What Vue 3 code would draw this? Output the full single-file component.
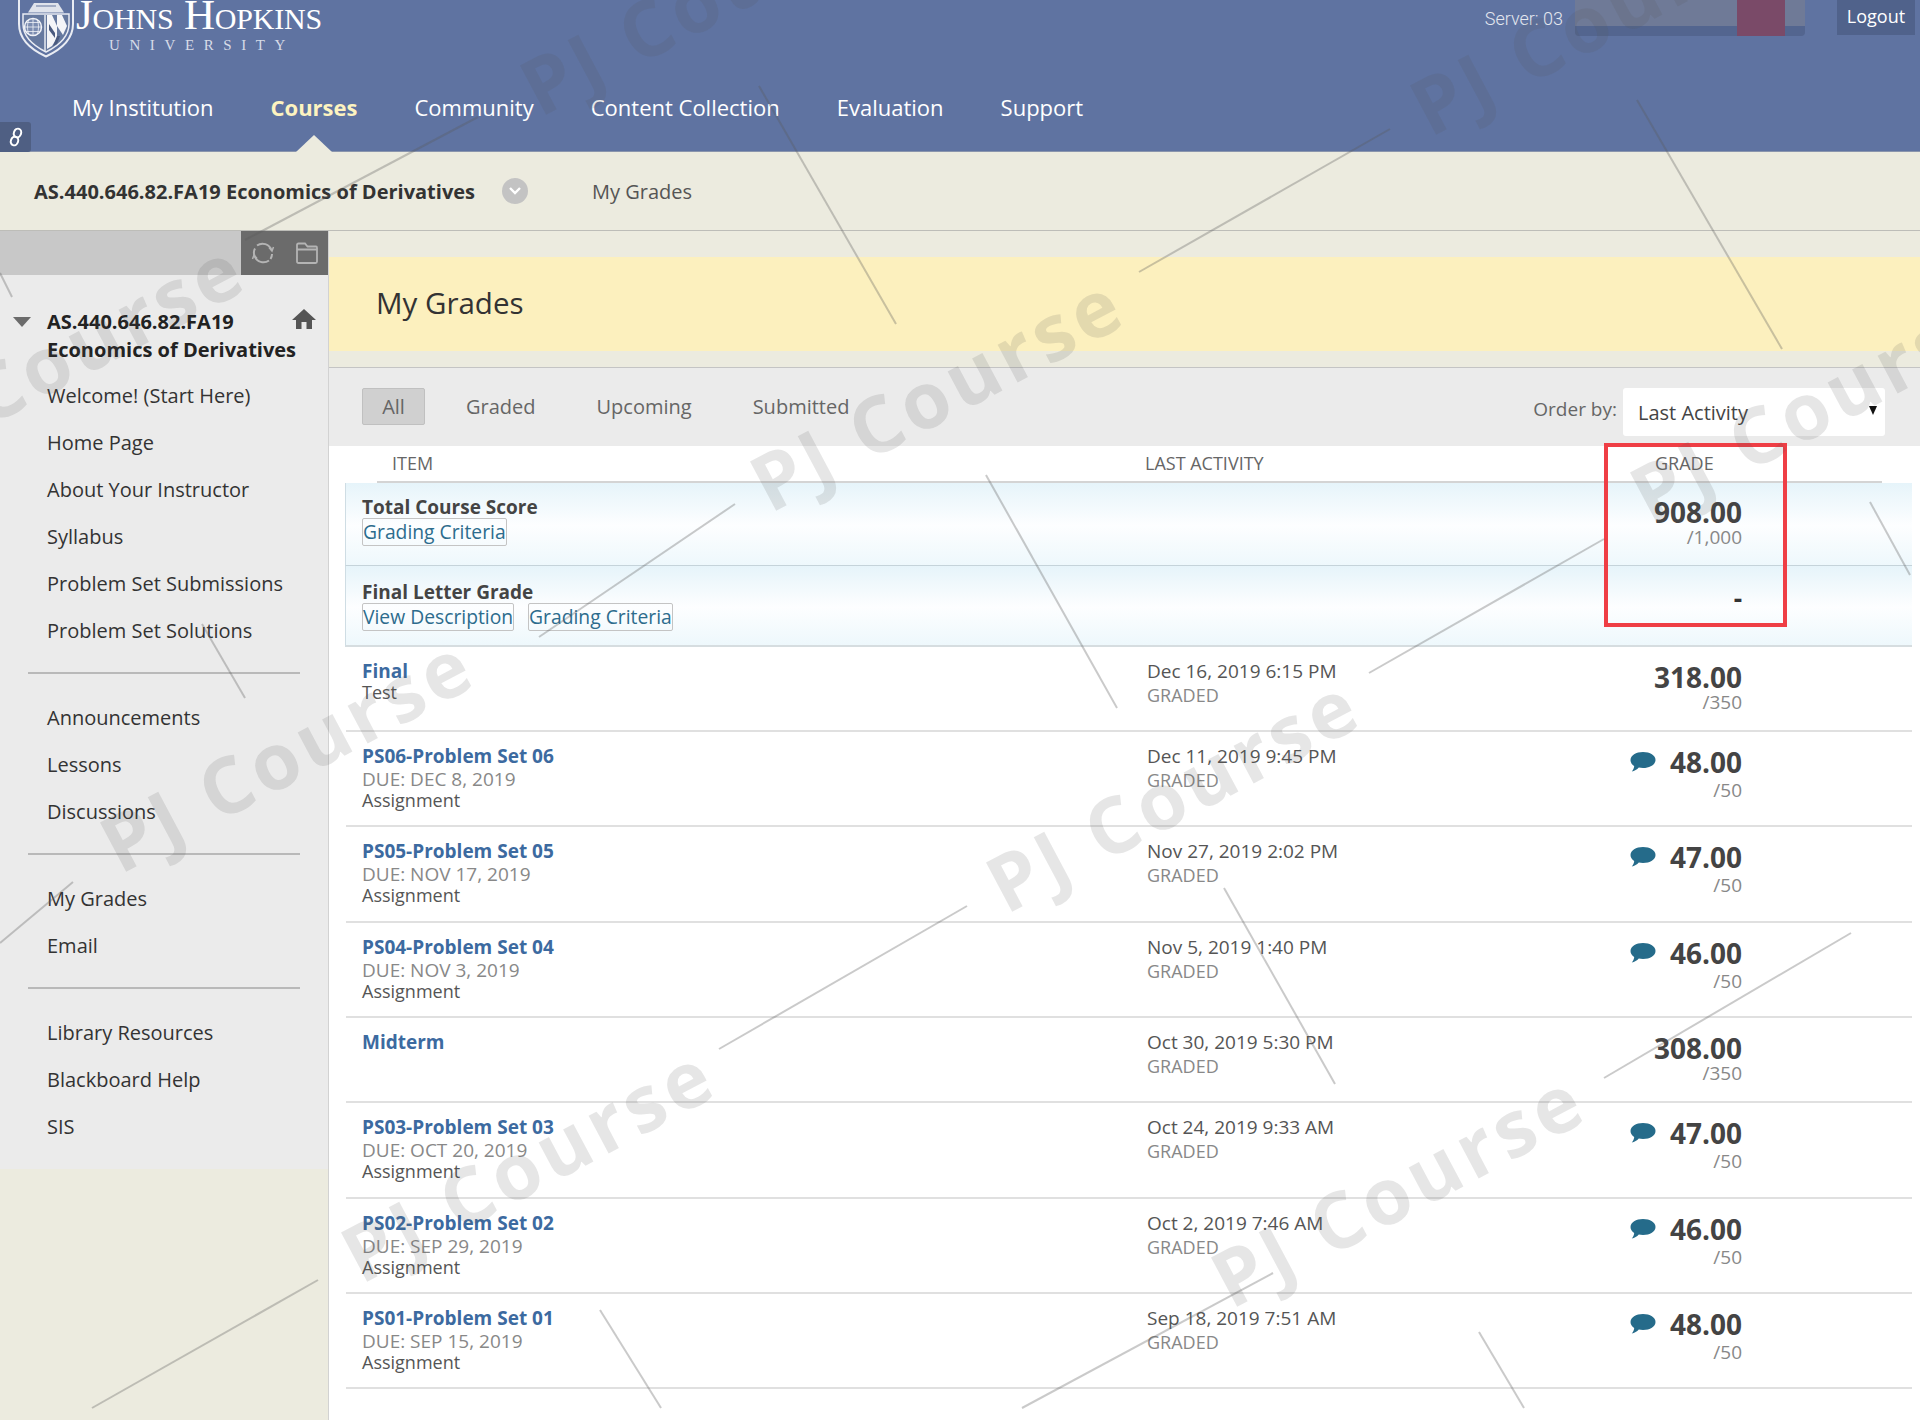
<template>
  <div class="page">
    <header class="top">
      <div class="top-row">
        <div class="logo">
          <svg class="shield" width="60" height="58" viewBox="0 0 60 58">
            <path d="M3 -4 H57 V24 C57 40 44 50 30 56.500 C16 50 3 40 3 24 Z" fill="#5f73a1" stroke="#e9ecf3" stroke-width="2" />
            <path d="M7 14 H53 V24 C53 37 42 46 30 52 C18 46 7 37 7 24 Z" fill="#66799f" stroke="#e9ecf3" stroke-width="1.500" />
            <path d="M12 12.500 L18 3 H42 L48 12.500 Z" fill="#dfe3ec" />
            <path d="M20 6 H40" stroke="#8d9ab8" stroke-width="1.500" />
            <circle cx="17" cy="27" r="8.500" fill="#7b8cb0" stroke="#f0f2f7" stroke-width="1.500" />
            <path d="M9 27 H25 M17 18.500 V35.500 M10.500 22.500 H23.500 M10.500 31.500 H23.500 M13 19.500 C11 24 11 30 13 34.500 M21 19.500 C23 24 23 30 21 34.500" fill="none" stroke="#f0f2f7" stroke-width="0.800" />
            <path d="M29 15 V51" stroke="#e9ecf3" stroke-width="1.500" />
            <path d="M31 15 H36 L41 26 V38 L36 46 L31 49 Z" fill="#f4f5f8" />
            <path d="M41 15 H46 L51 26 L47 35 L41 26 Z" fill="#f4f5f8" />
            <path d="M33 24 L39 33 V38 L33 30 Z M44 36 L41 44 L37 46 L41 36 Z" fill="#4a5a7f" />
          </svg>
          <div class="wordmark">
            <div class="wm-name">Johns Hopkins</div>
            <div class="wm-uni">UNIVERSITY</div>
          </div>
        </div>
        <div class="top-right">
          <span class="server">Server: 03</span>
          <div class="blurred"><span class="blur-red"></span></div>
          <a class="logout">Logout</a>
        </div>
      </div>
      <nav class="nav">
        <a v-for="item in navItems" :key="item" class="nav-item" :class="{ active: item === 'Courses' }">{{ item }}</a>
      </nav>
      <div class="quick-tab">
        <svg width="16" height="20" viewBox="0 0 16 20" fill="none" stroke="#fff" stroke-width="2">
          <ellipse cx="9.5" cy="6" rx="3.6" ry="4.4" transform="rotate(20 9.5 6)" />
          <ellipse cx="6.5" cy="14" rx="3.6" ry="4.4" transform="rotate(20 6.5 14)" />
        </svg>
      </div>
    </header>

    <div class="course-bar">
      <span class="course-name">AS.440.646.82.FA19 Economics of Derivatives</span>
      <span class="course-circle">
        <svg width="14" height="10" viewBox="0 0 14 10" fill="none" stroke="#fff" stroke-width="2.4"><path d="M2 2 L7 7 L12 2" /></svg>
      </span>
      <span class="crumb">My Grades</span>
    </div>

    <div class="body">
      <aside class="side">
        <div class="side-tools">
          <div class="tool-box">
            <svg width="24" height="24" viewBox="0 0 24 24" fill="none" stroke="#b4b4b4" stroke-width="2">
              <path d="M6 4.500 A9.500 9.500 0 0 1 20.500 9 M18 19.500 A9.500 9.500 0 0 1 3.500 15 C2.500 12 2.800 9.500 4 7.500" />
              <path d="M18 6.500 L21 10 L22.500 6 M6 17.500 L3 14 L1.500 18" stroke-width="1.500" />
              <path d="M21 13 C21 15 20.500 16.500 19.500 18" />
            </svg>
            <svg width="24" height="24" viewBox="0 0 24 24" fill="none" stroke="#b4b4b4" stroke-width="1.800">
              <path d="M2 4 Q2 2.500 3.500 2.500 H10 L12.500 5.500 H21 Q22 5.500 22 7 V20.500 Q22 22 20.500 22 H3.500 Q2 22 2 20.500 Z M2 8.500 H22" />
            </svg>
          </div>
        </div>
        <div class="side-panel">
          <div class="side-title">
            <span class="side-tri"></span>
            <div class="side-course">AS.440.646.82.FA19<br>Economics of Derivatives</div>
            <svg class="home" width="24" height="22" viewBox="0 0 24 22"><path d="M12 1 L24 12 H20 V21 H14.500 V14 H9.500 V21 H4 V12 H0 Z" fill="#555" /></svg>
          </div>
          <div v-for="(group, i) in sideGroups" :key="i" class="side-group">
            <a v-for="link in group" :key="link" class="side-link">{{ link }}</a>
          </div>
        </div>
      </aside>

      <main class="main">
        <div class="title-band"><h1>My Grades</h1></div>
        <div class="filters">
          <div class="tabs">
            <a v-for="tab in tabs" :key="tab" class="tab" :class="{ on: tab === 'All' }">{{ tab }}</a>
          </div>
          <div class="order">
            <span class="order-label">Order by:</span>
            <div class="select"><span>Last Activity</span><i class="caret"></i></div>
          </div>
        </div>
        <div class="table">
          <div class="thead">
            <span class="th-item">ITEM</span>
            <span class="th-date">LAST ACTIVITY</span>
            <span class="th-grade">GRADE</span>
          </div>
          <div class="calc calc-total">
            <div>
              <div class="calc-title">Total Course Score</div>
              <div class="calc-links"><a class="boxed">Grading Criteria</a></div>
            </div>
            <div class="grade-cell calc-grade">
              <div class="score">908.00</div>
              <div class="outof tight">/1,000</div>
            </div>
          </div>
          <div class="calc calc-letter">
            <div>
              <div class="calc-title">Final Letter Grade</div>
              <div class="calc-links"><a class="boxed">View Description</a><a class="boxed">Grading Criteria</a></div>
            </div>
            <div class="grade-cell dash">-</div>
          </div>
          <div v-for="row in rows" :key="row.title" class="row" :class="row.comment ? 'row-tall' : 'row-short'">
            <div class="cell-item">
              <a class="row-title">{{ row.title }}</a>
              <div v-if="row.due" class="row-due">{{ row.due }}</div>
              <div v-if="row.type" class="row-type">{{ row.type }}</div>
            </div>
            <div class="cell-date">
              <div class="date">{{ row.date }}</div>
              <div class="status">GRADED</div>
            </div>
            <div class="grade-cell">
              <div class="score-line">
                <svg v-if="row.comment" class="bubble" width="26" height="24" viewBox="0 0 26 24">
                  <path d="M13 2 C20 2 25.500 5.500 25.500 10 C25.500 14.500 20 18 13 18 C11.500 18 10 17.800 8.800 17.500 C7 19.500 4.500 21 1.800 21.500 C3.200 20 4 18 4.200 16 C1.800 14.500 0.500 12.400 0.500 10 C0.500 5.500 6 2 13 2 Z" fill="#256b8a" />
                </svg>
                <span class="score">{{ row.score }}</span>
              </div>
              <div class="outof">{{ row.outof }}</div>
            </div>
          </div>
        </div>
      </main>
    </div>

    <div class="red-box"></div>

    <svg class="watermark" width="1920" height="1420" viewBox="0 0 1920 1420">
      <text v-for="m in marks" :key="m.x + '-' + m.y" :x="m.x" :y="m.y" :transform="`rotate(-28 ${m.x} ${m.y})`" class="mark-text">PJ Course</text>
      <line v-for="(l, i) in lines" :key="i" :x1="l[0]" :y1="l[1]" :x2="l[2]" :y2="l[3]" class="mark-line" />
    </svg>
  </div>
</template>

<script setup>
const navItems = ['My Institution', 'Courses', 'Community', 'Content Collection', 'Evaluation', 'Support']
const tabs = ['All', 'Graded', 'Upcoming', 'Submitted']

const sideGroups = [
  ['Welcome! (Start Here)', 'Home Page', 'About Your Instructor', 'Syllabus', 'Problem Set Submissions', 'Problem Set Solutions'],
  ['Announcements', 'Lessons', 'Discussions'],
  ['My Grades', 'Email'],
  ['Library Resources', 'Blackboard Help', 'SIS']
]

const rows = [
  { title: 'Final', type: 'Test', date: 'Dec 16, 2019 6:15 PM', score: '318.00', outof: '/350' },
  { title: 'PS06-Problem Set 06', due: 'DUE: DEC 8, 2019', type: 'Assignment', date: 'Dec 11, 2019 9:45 PM', score: '48.00', outof: '/50', comment: true },
  { title: 'PS05-Problem Set 05', due: 'DUE: NOV 17, 2019', type: 'Assignment', date: 'Nov 27, 2019 2:02 PM', score: '47.00', outof: '/50', comment: true },
  { title: 'PS04-Problem Set 04', due: 'DUE: NOV 3, 2019', type: 'Assignment', date: 'Nov 5, 2019 1:40 PM', score: '46.00', outof: '/50', comment: true },
  { title: 'Midterm', date: 'Oct 30, 2019 5:30 PM', score: '308.00', outof: '/350' },
  { title: 'PS03-Problem Set 03', due: 'DUE: OCT 20, 2019', type: 'Assignment', date: 'Oct 24, 2019 9:33 AM', score: '47.00', outof: '/50', comment: true },
  { title: 'PS02-Problem Set 02', due: 'DUE: SEP 29, 2019', type: 'Assignment', date: 'Oct 2, 2019 7:46 AM', score: '46.00', outof: '/50', comment: true },
  { title: 'PS01-Problem Set 01', due: 'DUE: SEP 15, 2019', type: 'Assignment', date: 'Sep 18, 2019 7:51 AM', score: '48.00', outof: '/50', comment: true }
]

// watermark positions, baseline start of each rotated label
const marks = [
  { x: 540, y: 118 },
  { x: 1430, y: 138 },
  { x: -109, y: 479 },
  { x: 770, y: 514 },
  { x: 1650, y: 525 },
  { x: 120, y: 875 },
  { x: 1006, y: 915 },
  { x: 361, y: 1285 },
  { x: 1231, y: 1310 }
]

const lines = [
  [759, 86, 896, 324], [1139, 272, 1390, 129], [1637, 100, 1782, 349],
  [986, 475, 1117, 708], [1369, 673, 1604, 539], [1870, 502, 1910, 575],
  [539, 637, 735, 504], [202, 624, 245, 698], [1224, 888, 1335, 1084],
  [719, 1049, 967, 906], [1604, 1078, 1851, 933], [92, 1408, 318, 1280],
  [600, 1310, 661, 1408], [1022, 1408, 1273, 1273], [1479, 1332, 1524, 1408],
  [0, 943, 73, 882], [478, 117, 245, 240], [0, 273, 12, 297]
]
</script>

<style>
html, body {
  margin: 0;
  background: #fff;
}
</style>

<style scoped>
.page {
  position: relative;
  width: 1920px;
  height: 1420px;
  overflow: hidden;
  font-family: "Open Sans", "Liberation Sans", sans-serif;
  color: #333;
  background: #fff;
}
.top {
  position: relative;
  height: 152px;
  background: #5f73a1;
  box-sizing: border-box;
  border-bottom: 1px solid #8a95ad;
}
.top-row {
  height: 78px;
  display: flex;
  justify-content: space-between;
  align-items: flex-start;
}
.logo {
  display: flex;
  padding-left: 16px;
}
.shield {
  display: block;
  flex: none;
}
.wm-name {
  font-family: "Liberation Serif", serif;
  font-variant: small-caps;
  font-size: 43px;
  line-height: 34px;
  margin-top: -2px;
  color: #fff;
  white-space: nowrap;
  letter-spacing: -0.2px;
}
.wm-uni {
  font-family: "Liberation Serif", serif;
  font-size: 15px;
  letter-spacing: 9.6px;
  color: #d7dce8;
  margin: 4px 0 0 33px;
  line-height: 18px;
}
.top-right {
  display: flex;
  align-items: flex-start;
}
.server {
  font-family: Roboto, sans-serif;
  font-weight: 300;
  font-size: 18px;
  line-height: 37px;
  color: #e4e7ef;
  margin-right: 12px;
}
.blurred {
  position: relative;
  width: 230px;
  height: 36px;
  background: #6f7a97;
  border-bottom: 10px solid #53658f;
  box-sizing: border-box;
  border-radius: 0 0 4px 4px;
}
.blur-red {
  position: absolute;
  left: 162px;
  top: 0;
  width: 48px;
  height: 36px;
  background: #7a4a68;
}
.logout {
  width: 78px;
  height: 35px;
  margin: 0 5px 0 32px;
  background: #50628b;
  color: #fff;
  font-size: 18px;
  line-height: 33px;
  text-align: center;
}
.nav {
  display: flex;
  gap: 57px;
  padding-left: 72px;
  padding-top: 12px;
}
.nav-item {
  position: relative;
  font-size: 22px;
  line-height: 34px;
  color: #fff;
  white-space: nowrap;
}
.nav-item.active {
  color: #fdf3c0;
  font-weight: 700;
}
.nav-item.active::after {
  content: "";
  position: absolute;
  left: 50%;
  margin-left: -18px;
  top: 45px;
  border-left: 18px solid transparent;
  border-right: 18px solid transparent;
  border-bottom: 17px solid #ecebdf;
}
.quick-tab {
  position: absolute;
  left: 0;
  top: 122px;
  width: 31px;
  height: 30px;
  background: #4f5f83;
  border-radius: 0 3px 3px 0;
  display: flex;
  align-items: center;
  justify-content: center;
}
.course-bar {
  height: 79px;
  box-sizing: border-box;
  border-bottom: 1px solid #bdbdb8;
  background: #ecebdf;
  display: flex;
  align-items: center;
  padding-left: 34px;
}
.course-name {
  font-weight: 700;
  font-size: 20px;
  color: #333;
  white-space: nowrap;
}
.course-circle {
  width: 26px;
  height: 26px;
  border-radius: 50%;
  background: #c3c3c3;
  margin-left: 27px;
  display: flex;
  align-items: center;
  justify-content: center;
}
.crumb {
  margin-left: 64px;
  font-size: 20px;
  color: #555;
}
.body {
  display: flex;
  height: 1189px;
}
.side {
  width: 329px;
  box-sizing: border-box;
  border-right: 1px solid #d2d2d2;
  background: #ecebdf;
  flex: none;
}
.side-tools {
  height: 44px;
  background: #c8c8c8;
  display: flex;
  justify-content: flex-end;
}
.tool-box {
  width: 87px;
  background: #6b6b6b;
  display: flex;
  align-items: center;
  justify-content: center;
  gap: 20px;
}
.side-panel {
  height: 894px;
  box-sizing: border-box;
  background: #ebebeb;
  padding: 33px 28px 0 0;
}
.side-title {
  display: flex;
  align-items: flex-start;
  padding-left: 13px;
  height: 55px;
}
.side-tri {
  width: 0;
  height: 0;
  flex: none;
  margin-top: 9px;
  border-left: 9px solid transparent;
  border-right: 9px solid transparent;
  border-top: 10px solid #6b6b6b;
}
.side-course {
  margin-left: 16px;
  flex: 1;
  min-width: 0;
  font-size: 20px;
  line-height: 28px;
  font-weight: 700;
  color: #222;
  white-space: nowrap;
}
.home {
  flex: none;
  margin: 0 -16px 0 0;
}
.side-group {
  margin-left: 28px;
  padding: 9px 0 18px;
  border-bottom: 2px solid #b9b9b9;
}
.side-group + .side-group {
  padding-top: 20px;
}
.side-group:last-child {
  border-bottom: none;
}
.side-link {
  display: block;
  margin-left: 19px;
  font-size: 20px;
  line-height: 47px;
  color: #333;
  white-space: nowrap;
}
.main {
  flex: 1;
  background: #fff;
  min-width: 0;
}
.title-band {
  height: 137px;
  box-sizing: border-box;
  background: #ecebdf;
  border-bottom: 1px solid #c4c4c4;
  padding-top: 26px;
}
.title-band h1 {
  margin: 0;
  height: 94px;
  background: #fcf0be;
  padding-left: 47px;
  font-size: 29.5px;
  font-weight: 400;
  line-height: 92px;
  color: #333;
}
.filters {
  height: 78px;
  background: #ebebeb;
  display: flex;
  justify-content: space-between;
  padding: 20px 35px 0 33px;
  box-sizing: border-box;
}
.tabs {
  display: flex;
  align-items: flex-start;
  gap: 61px;
}
.tab {
  font-size: 20px;
  line-height: 38px;
  color: #666;
}
.tab.on {
  width: 63px;
  height: 37px;
  margin-right: -20px;
  text-align: center;
  background: #d0d0d0;
  border: 1px solid #c0c0c0;
  border-radius: 2px;
  box-sizing: border-box;
  line-height: 35px;
}
.order {
  display: flex;
  align-items: flex-start;
  gap: 6px;
}
.order-label {
  font-size: 19px;
  line-height: 42px;
  color: #666;
}
.select {
  width: 262px;
  height: 48px;
  background: #fff;
  border-radius: 3px;
  display: flex;
  align-items: center;
  justify-content: space-between;
  padding: 0 8px 0 15px;
  box-sizing: border-box;
  font-size: 20px;
  color: #444;
}
.caret {
  width: 0;
  height: 0;
  margin-top: -4px;
  border-left: 4px solid transparent;
  border-right: 4px solid transparent;
  border-top: 9px solid #111;
}
.table {
  padding-left: 17px;
  padding-right: 8px;
}
.thead {
  position: relative;
  height: 37px;
  margin: 0 30px 0 31px;
  border-bottom: 2px solid #d4d4d4;
  box-sizing: border-box;
  display: grid;
  grid-template-columns: 753px 510px auto;
  padding-left: 15px;
  font-size: 18px;
  line-height: 34px;
  color: #666;
}
.calc {
  display: grid;
  grid-template-columns: 785px 595px;
  padding-left: 16px;
  margin-left: -1px;
  border-left: 1px solid #cfdde4;
  box-sizing: border-box;
  background: linear-gradient(180deg, #e6f4fa 0%, #fdfeff 52%, #eef8fc 100%);
}
.calc-total {
  height: 83px;
  padding-top: 12px;
  border-bottom: 1px solid #c5d3da;
}
.calc-letter {
  height: 81px;
  padding-top: 14px;
  border-bottom: 2px solid #d6dde0;
}
.calc-title {
  font-size: 19px;
  line-height: 24px;
  font-weight: 700;
  color: #444;
}
.calc-links {
  display: flex;
  gap: 14px;
  margin-top: -1px;
}
.boxed {
  font-size: 19.3px;
  line-height: 26px;
  color: #2d6c8d;
  border: 1px solid #c4c4c4;
  border-radius: 2px;
  white-space: nowrap;
}
.grade-cell {
  text-align: right;
}
.calc-grade {
  margin-top: -1px;
}
.dash {
  font-size: 26px;
  font-weight: 700;
  line-height: 34px;
  padding-top: 1px;
}
.score {
  font-size: 28px;
  font-weight: 700;
  line-height: 36px;
  color: #444;
}
.outof {
  font-size: 19px;
  line-height: 24px;
  color: #888;
  margin-top: -5px;
}
.outof.tight {
  margin-top: -5px;
}
.row {
  display: grid;
  grid-template-columns: 785px 330px 265px;
  padding-left: 16px;
  border-bottom: 2px solid #e0e0e0;
  box-sizing: border-box;
  padding-top: 13px;
}
.row-short {
  height: 85px;
}
.row-tall {
  height: 95.4px;
}
.row-title {
  display: block;
  font-size: 19px;
  line-height: 23px;
  font-weight: 700;
  color: #3c6aa0;
}
.row-due {
  font-size: 19px;
  line-height: 23px;
  color: #888;
}
.row-type {
  font-size: 18px;
  line-height: 19px;
  color: #555;
}
.date {
  font-size: 19px;
  line-height: 23px;
  color: #555;
}
.status {
  font-size: 18px;
  line-height: 24px;
  color: #888;
}
.score-line {
  display: flex;
  justify-content: flex-end;
  align-items: center;
  gap: 14px;
  margin-top: -1px;
}
.row-tall .outof {
  margin-top: -2px;
}
.red-box {
  position: absolute;
  left: 1604px;
  top: 443px;
  width: 183px;
  height: 184px;
  box-sizing: border-box;
  border: 4px solid #ef3e45;
}
.watermark {
  position: absolute;
  left: 0;
  top: 0;
  pointer-events: none;
}
.mark-text {
  font-family: "Open Sans", sans-serif;
  font-weight: 700;
  font-size: 78px;
  letter-spacing: 5px;
  fill: rgba(90, 90, 90, 0.15);
}
.mark-line {
  stroke: rgba(90, 90, 90, 0.32);
  stroke-width: 2;
}
</style>
